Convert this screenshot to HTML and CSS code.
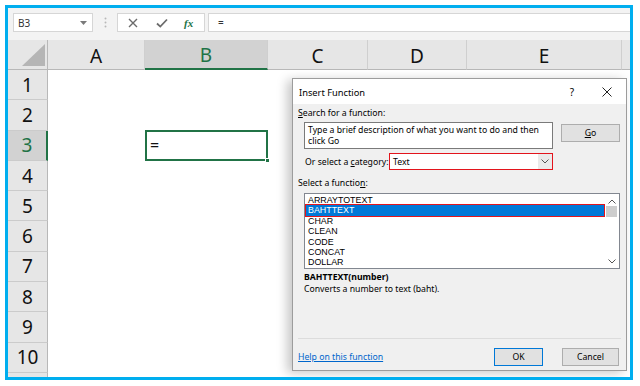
FILE: index.html
```html
<!DOCTYPE html>
<html>
<head>
<meta charset="utf-8">
<link rel="stylesheet" href="styles.css">
</head>
<body>
<div class="frame">
  <div class="fbar">
    <div class="namebox"><span>B3</span><svg class="nb-arrow" width="7" height="4" viewBox="0 0 7 4"><path d="M0 0H7L3.5 4Z" fill="#7a7a7a"/></svg></div>
    <div class="grip"><svg width="3" height="11" viewBox="0 0 3 11"><circle cx="1.5" cy="1.5" r="1" fill="#b8b8b8"/><circle cx="1.5" cy="5.5" r="1" fill="#b8b8b8"/><circle cx="1.5" cy="9.5" r="1" fill="#b8b8b8"/></svg></div>
    <div class="fxbox">
      <svg class="ico-x" width="10" height="10" viewBox="0 0 10 10"><path d="M1 1L9 9M9 1L1 9" stroke="#6b6b6b" stroke-width="1.4"/></svg>
      <svg class="ico-ok" width="12" height="10" viewBox="0 0 12 10"><path d="M1 5.5L4.3 8.6L11 1.5" stroke="#6b6b6b" stroke-width="1.8" fill="none"/></svg>
      <span class="fx">fx</span>
    </div>
    <div class="finput">=</div>
  </div>
  <div class="sheet">
    <div class="corner"><svg width="23" height="22" viewBox="0 0 23 22"><path d="M23 0V22H0Z" fill="#b5b5b5"/></svg></div>
    <div class="ch">A</div>
    <div class="ch sel">B</div>
    <div class="ch">C</div>
    <div class="ch">D</div>
    <div class="ch">E</div>
    <div class="ch last"></div>
    <div class="rh">1</div>
    <div class="rh">2</div>
    <div class="rh rsel">3</div>
    <div class="rh">4</div>
    <div class="rh">5</div>
    <div class="rh">6</div>
    <div class="rh">7</div>
    <div class="rh">8</div>
    <div class="rh">9</div>
    <div class="rh">10</div>
    <div class="rh"></div>
    <div class="active"><span>=</span><i class="handle"></i></div>
  </div>

  <div class="dialog">
    <div class="dlg-title">
      <span class="dlg-name">Insert Function</span>
      <span class="dlg-help">?</span>
      <svg class="dlg-close" width="10" height="10" viewBox="0 0 10 10"><path d="M0.5 0.5L9.5 9.5M9.5 0.5L0.5 9.5" stroke="#222" stroke-width="1"/></svg>
    </div>
    <div class="dlg-body">
      <div class="lbl"><u>S</u>earch for a function:</div>
      <div class="search-row">
        <div class="search-box">Type a brief description of what you want to do and then click Go</div>
        <div class="btn go"><u>G</u>o</div>
      </div>
      <div class="cat-row">
        <span class="cat-lbl">Or select a <u>c</u>ategory:</span>
        <div class="select"><span>Text</span><span class="sel-btn"><svg width="8" height="5" viewBox="0 0 8 5"><path d="M0.5 0.5L4 4L7.5 0.5" stroke="#555" fill="none"/></svg></span></div>
      </div>
      <div class="lbl lbl2">Select a functio<u>n</u>:</div>
      <div class="listbox">
        <div class="items">
          <div class="item">ARRAYTOTEXT</div>
          <div class="item hl">BAHTTEXT</div>
          <div class="item">CHAR</div>
          <div class="item">CLEAN</div>
          <div class="item">CODE</div>
          <div class="item">CONCAT</div>
          <div class="item">DOLLAR</div>
        </div>
        <div class="scroll">
          <svg width="8" height="5" viewBox="0 0 8 5"><path d="M0.5 4.5L4 1L7.5 4.5" stroke="#555" fill="none"/></svg>
          <div class="thumb"></div>
          <div class="track"></div>
          <svg width="8" height="5" viewBox="0 0 8 5"><path d="M0.5 0.5L4 4L7.5 0.5" stroke="#555" fill="none"/></svg>
        </div>
      </div>
      <div class="sig">BAHTTEXT(number)</div>
      <div class="desc">Converts a number to text (baht).</div>
      <div class="sep"></div>
      <div class="foot">
        <span class="link">Help on this function</span>
        <div class="btn ok">OK</div>
        <div class="btn cancel">Cancel</div>
      </div>
    </div>
  </div>
</div>
</body>
</html>
```
FILE: styles.css
```css
* { box-sizing: border-box; }
html, body { margin: 0; padding: 0; background: #fff; }
body { width: 640px; height: 386px; overflow: hidden; }

.frame {
  margin: 5px;
  width: 628px;
  height: 375px;
  border: 3px solid #00aeef;
  position: relative;
  overflow: hidden;
  background: #fff;
  font-family: "Noto Sans", sans-serif;
}

/* formula bar */
.fbar {
  height: 32px;
  background: #f3f3f3;
  display: flex;
  align-items: flex-start;
  padding: 5px 0 0 5px;
}
.namebox {
  width: 80px; height: 19px;
  background: #fff;
  border: 1px solid #d6d6d6;
  display: flex; align-items: center; justify-content: space-between;
  padding: 0 5px 0 4px;
  font-size: 10px; color: #333;
}
.grip { width: 24px; height: 19px; display: flex; align-items: center; justify-content: center; }
.fxbox {
  width: 88px; height: 19px;
  background: #fff;
  border: 1px solid #d6d6d6;
  display: flex; align-items: center;
  padding-left: 10px;
}
.ico-x { margin-right: 18px; }
.ico-ok { margin-right: 16px; }
.fx { font-family: "Liberation Serif", serif; font-style: italic; color: #217346; font-size: 11px; font-weight: bold; }
.finput {
  flex: 1; height: 19px;
  margin-left: 3px; margin-right: -2px;
  background: #fff;
  border: 1px solid #d6d6d6;
  font-size: 10px; color: #333;
  padding-left: 9px; line-height: 17px;
}

/* sheet */
.sheet {
  display: grid;
  grid-template-columns: 40px 97px 123px 100px 99px 155px 8px;
  grid-template-rows: 30px repeat(11, 30.3px);
  font-family: "Noto Sans", sans-serif;
}
.corner {
  background: #e6e6e6;
  border-right: 1px solid #b8b8b8;
  border-bottom: 1px solid #b8b8b8;
  display: flex; align-items: flex-end; justify-content: flex-end;
  padding: 0 2px 3px 0;
}
.ch {
  background: #e6e6e6;
  border-bottom: 1px solid #b8b8b8;
  border-right: 1px solid #cfcfcf;
  display: flex; align-items: center; justify-content: center;
  font-size: 19px; color: #111;
  padding-top: 2px;
}
.ch.sel { background: #d2d2d2; border-bottom: 2px solid #217346; color: #217346; }
.ch.last { border-right: none; }
.rh {
  grid-column: 1;
  background: #e6e6e6;
  border-right: 1px solid #b8b8b8;
  border-bottom: 1px solid #cbcbcb;
  display: flex; align-items: center; justify-content: center;
  font-size: 19px; color: #111;
}
.rh.rsel { background: #d2d2d2; border-right: 2px solid #217346; color: #217346; }
.active {
  grid-column: 3; grid-row: 4;
  border: 2px solid #217346;
  position: relative;
  font-size: 16px; color: #111;
  display: flex; align-items: center;
  padding-left: 3px;
  margin: -1px 0 0 0;
}
.handle {
  position: absolute; right: -4px; bottom: -4px;
  width: 5px; height: 5px; background: #217346; border: 1px solid #fff;
}

/* dialog */
.dialog {
  position: absolute;
  left: 284px; top: 70px;
  width: 335px; height: 293px;
  background: #f0f0f0;
  border: 1px solid #9c9c9c;
  box-shadow: -5px 2px 10px rgba(0,0,0,0.22);
  font-family: "Noto Sans", sans-serif;
  font-size: 8.7px; color: #000;
  display: flex; flex-direction: column;
  white-space: nowrap;
}
.dlg-title {
  height: 25px; background: #fff;
  display: flex; align-items: center;
  padding: 1px 0 0 6px;
}
.dlg-name { flex: 1; font-size: 9.3px; }
.dlg-help { margin-right: 28px; font-size: 10px; }
.dlg-close { margin-right: 14px; }
.dlg-body { padding: 3px 0 0 5px; display: flex; flex-direction: column; }
.lbl { line-height: 12px; }
.lbl2 { margin-top: 7px; }
.search-row { display: flex; align-items: flex-start; margin-top: 3px; margin-left: 6px; }
.search-box {
  width: 249px; height: 27px;
  background: #fff;
  border: 1px solid #7a7a7a;
  padding: 2px 3px;
  line-height: 10.5px;
  white-space: normal;
}
.btn {
  background: #e1e1e1;
  border: 1px solid #adadad;
  display: flex; align-items: center; justify-content: center;
  height: 18px;
}
.go { width: 59px; margin: 2px 0 0 8px; }
.cat-row { display: flex; align-items: center; margin-top: 4px; margin-left: 7px; }
.cat-lbl { width: 84px; }
.select {
  width: 164px; height: 17px;
  background: #fff;
  border: 1px solid #e3141c;
  display: flex; align-items: center; justify-content: space-between;
  padding-left: 3px;
}
.sel-btn {
  width: 14px; height: 15px; background: #eaeaea;
  display: flex; align-items: center; justify-content: center;
}
.listbox {
  margin: 4px 0 0 6px;
  width: 316px; height: 76px;
  background: #fff;
  border: 1px solid #828790;
  display: flex;
  padding: 1px;
}
.items { flex: 1; }
.item {
  height: 10.4px; line-height: 10.4px; padding-left: 2px;
  font-family: "Liberation Sans", Arial, sans-serif; font-size: 8.9px;
}
.item.hl { background: #0078d7; color: #fff; outline: 1px solid #e3141c; }
.scroll {
  width: 13px; margin-left: 1px;
  display: flex; flex-direction: column; align-items: center;
  padding-top: 4px;
}
.thumb { width: 11px; height: 11px; background: #cdcdcd; margin-top: 2px; }
.track { flex: 1; }
.scroll svg:last-child { margin-bottom: 3px; }
.sig { margin: 2px 0 0 6px; font-weight: bold; line-height: 12px; }
.desc { margin-left: 6px; line-height: 12px; }
.sep { margin-top: 43px; height: 1px; background: #dcdcdc; width: 323px; }
.foot { display: flex; align-items: center; margin-top: 9px; }
.link { flex: 1; color: #0066cc; text-decoration: underline; }
.ok { width: 49px; border: 1px solid #0078d7; }
.cancel { width: 57px; margin-left: 19px; margin-right: 7px; }
```
